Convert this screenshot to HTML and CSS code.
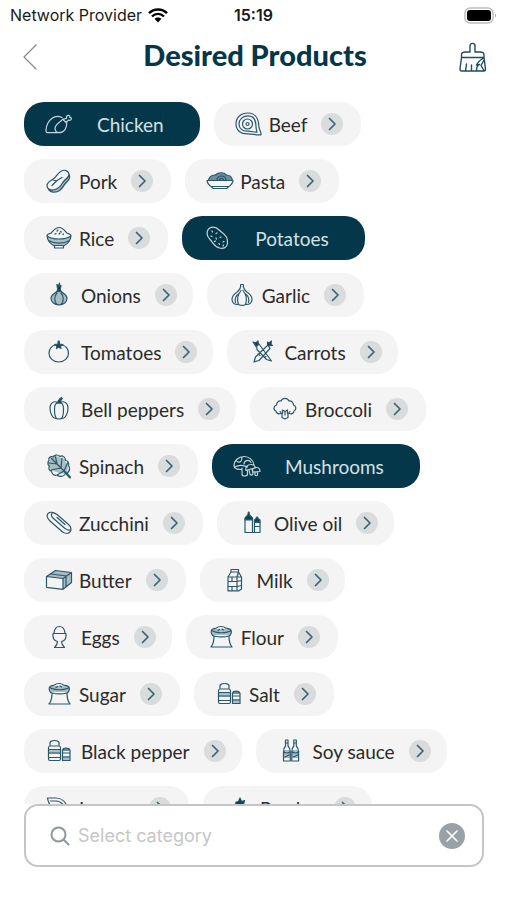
FILE: index.html
```html
<!DOCTYPE html>
<html lang="en">
<head>
    <meta charset="UTF-8">
    <meta name="viewport" content="width=device-width, initial-scale=1.0">
    <title>Desired Products</title>
    <link rel="stylesheet" href="styles.css">
</head>
<body>
    <!-- icon sprite -->
    <svg class="sprite" aria-hidden="true">
        <symbol id="arrow" viewBox="0 0 22 22"><path d="M8.500 5.500l5.500 5.500-5.500 5.500"/></symbol>
        <symbol id="chicken" viewBox="0 0 28 28">
            <path d="M17 7.500C10 4 2 9.500 1 20c-.1 1.800.6 2.700 2 2.700h10.500c6.500 0 8.500-5.500 8.200-10.200"/>
            <path d="M18 9c-2 2.500-6 4-7.500 7.500-1.300 3.200.3 6 3 6M18 9.500l3 3 2.500-2.500c1.500.8 3-.2 2.800-1.500-.1-.9-.8-1.300-1.600-1.200.3-1-.3-2-1.400-2-1.500 0-2.300 1.500-1.600 2.800z"/>
        </symbol>
        <symbol id="beef" viewBox="0 0 28 28">
            <path d="M13 3C6 3 1 7.500 1 14s5 10 11.500 9.800c5-.2 9 1.700 13.500 1 .8-2-2-4.500-2.200-9C23.500 8 19.500 3 13 3z"/>
            <path d="M13 5.800c-5 0-9 3.500-9 8.200s3.500 7.300 8.500 7.200c4 0 6.500 1 9.500 1-.8-2-1-4-1.100-7C20.700 9.500 18 5.800 13 5.800z"/>
            <circle cx="12.500" cy="14" r="5"/><circle cx="12.500" cy="14" r="1.500"/>
        </symbol>
        <symbol id="pork" viewBox="0 0 28 28">
            <path class="shade" d="M23.500 7c3 3.500 1 7-2 9.500-2.500 2.500-4 8-10.500 8.500-4 .3-7-1-8-4 7 3 12 0 14-5s6-4 6.500-9z"/>
            <path d="M16 4.200c3.500-2 7.500-.7 8 3 .4 4-4.500 5-6.500 8.800S13 22.500 8 23c-3.500.3-6-1.500-6-4.500 0-4 4-4.500 7-7s3.500-5.300 7-7.300zM3 21c1.500 5 8 5 11.500 2.500 4-3 4-6 7-8.500 3-2.300 4-5 2.500-8"/>
            <path d="M7 18.500l5-5 5-3M9 13.500l3 0"/>
        </symbol>
        <symbol id="pasta" viewBox="0 0 28 28">
            <path class="shade deep" d="M2 13.500C3 9.500 6 8 9 7.500c4-3 10-2 12 .5 3 .5 5 2.500 5.500 5.500z"/>
            <path d="M1 13.500h26c0 3.500-3 5.500-6.500 8h-13C4 19 1 17 1 13.500zM2.500 13.500C3 9.500 6 8 9.500 8c3-3 8-3 11 0 3.500 0 5.500 2.500 6 5.500M11 13.500c0-6 9-6 9 0M13.500 13.500c0-3 4-3 4 0M6 19.500h16"/>
        </symbol>
        <symbol id="rice" viewBox="0 0 28 28">
            <path class="shade" d="M2 12c7 3.500 17 3.500 24 0-.5 5-3 7.500-7 9.500H9C5 19.500 2.500 17 2 12z"/>
            <path d="M2 12c0-1.500 2-2.300 4-2.800C8 7.500 10 3.500 14 3.500s6 4 8 5.700c2 .5 4 1.300 4 2.800-.5 5-3.500 8-7.500 10v2h-9v-2C5.500 20 2.500 17 2 12zM2 12c5 4 19 4 24 0M3.500 16.500c6 3.500 15 3.500 21 0M9 21.500h10M12 7l1-1M15.500 7.500l1 .5M10 10l1-.5M14 10l1-1M18 10.500l.5-.5"/>
        </symbol>
        <symbol id="potato" viewBox="0 0 28 28">
            <path d="M10.500 3.200c4 0 5.500 3.300 8.500 5.300 4 2.600 6 6.500 5.500 11-.5 4-4 5.500-8 4.500C11 22.700 10.500 19 7.500 16 5 13.500 3.500 11 4.300 7.500 5 4.800 7.500 3.200 10.500 3.200z"/>
            <path d="M9 7l.5 1M14 9l-1 .5M8 12l1 .5M13 14l.5 1M18 13l-1 .5M20 18l1-.5M16 19.500l.5 1M11.500 17.500l1-.5M20 22l.5-1"/>
        </symbol>
        <symbol id="onion" viewBox="0 0 28 28">
            <path class="shade" d="M14 8c-2 3-8 3.500-8 9 0 4 3.500 7 8 7s8-3 8-7c0-5.500-6-6-8-9z"/>
            <path class="solid" d="M12.800 9l-1-5.500 1.700 1.500L14.500 2l.3 3.500L16 4.500 15.200 9l1 1.500h-4.400z"/>
            <path d="M13 9c-1 3-7 3.500-7 8.300C6 21 9.500 23.800 14 23.800s8-2.800 8-6.500C22 12.500 16 12 15 9M12 12c-3 3-3 8.500 0 11.500M16 12c3 3 3 8.500 0 11.500"/>
        </symbol>
        <symbol id="garlic" viewBox="0 0 28 28">
            <path d="M12.700 3.500c.3 4-1.400 6-4.200 8C5.500 13.500 4 15.500 4 18.500c0 3.500 3 5.500 6.500 4.800 1.500 1.500 5.500 1.500 7 0 3.500.7 6.500-1.300 6.500-4.800 0-3-1.500-5-4.500-7-2.800-2-4.500-4-4.200-8zM13 9.500c-3.500 4.500-4.500 9-2.500 13.800M15 9.500c3.500 4.500 4.500 9 2.500 13.800M11 12.500c-3.500 2.500-4.500 5.500-3.500 9M17 12.500c3.500 2.500 4.500 5.500 3.500 9"/>
        </symbol>
        <symbol id="tomato" viewBox="0 0 28 28">
            <path d="M10.500 7C7 7.500 4 10.800 4 15.200 4 20 8 24 13.700 24s9.800-4 9.800-8.800c0-4.400-3-7.700-6.500-8.200"/>
            <path class="solid" d="M13.200 3h1l.3 3.200 3.500.3-2.500 1.500.5 2.500-2.300-1.500-2.300 1.500.5-2.500L9.500 6.500l3.400-.3z"/>
        </symbol>
        <symbol id="carrots" viewBox="0 0 28 28">
            <path d="M8.500 7.500L11 6l12.500 17-5-1.500L9 11.500zM20 7l2 3.500L11 22.500 6 24l1.500-5zM10 16l2 1.500M16.500 19.500l1.500-1"/>
            <path class="solid" d="M5 4l3 .8L10 3l.5 3.500L8 8.500zM19.500 4l1.500 1 2.500-2-.5 3.500 1.500 1-4 .5-1-1.500z"/>
        </symbol>
        <symbol id="bellpepper" viewBox="0 0 28 28">
            <path d="M12.500 7.500C9 5.500 5 8 5 13c0 6 3 10.500 5.500 10.500 1 0 1.500.5 3.500.5s2.500-.5 3.500-.5C20 23.500 23 19 23 13c0-5-4-7.500-7.500-5.500M14 8c-3.500-.5-4.500 2-4.500 6 0 5 1 9 2.500 9.700M14 8c3.500-.5 4.500 2 4.500 6 0 5-1 9-2.500 9.700"/>
            <path class="solid" d="M12 8c1.500-1.500 1.500-4 4.500-5.500l.8 1c-1.500 1-1.800 2.500-1.300 4.500z"/>
        </symbol>
        <symbol id="broccoli" viewBox="0 0 28 28">
            <path d="M9.500 18.500c-2 1-4.500-.5-4.500-2.500-3-1-2.500-5 .5-6 0-3 2.500-4.500 4.500-4 1.500-3.500 6.500-3.500 8 0 2-.5 4.500 1 4.500 4 3 1 3 5 .5 6 0 2-2.500 3.500-4.500 2.500"/>
            <path d="M9 16.500l2 2.500v3.500l3 1.500 3-1.500V19l2-2.500M11.500 18.500V15l2.500 1.500 2.500-1.500v3.500M14 17v3"/>
        </symbol>
        <symbol id="spinach" viewBox="0 0 28 28">
            <path class="shade" d="M8 3l6 2 5 2 4 7-1 8-8-1-8-3-3-6z"/>
            <path d="M22 21.500c3-3 3-6 1.500-8 .8-3-1-5-3-5C20.500 5 17.500 3 15 4.500 12.500 2 9 3 8.500 5 5.500 3.500 3 6 4 8.500c-2 2-1 5 .5 5.500-1.500 2.500 0 5 2 5 0 3 3 5 5.500 4 2 2 6 2 8-.5M6 6l19 19M12 12l-1.500-7M12 12l-8-1M16 16l1-10M16 16l-10 2M19 19l4-9M19 19l-7 4"/>
            <path d="M20 20l5 5.500" stroke-width="2"/>
        </symbol>
        <symbol id="mushrooms" viewBox="0 0 28 28">
            <path d="M9 17.500c-4 0-8-.5-8-3.500C1 8.500 5.500 4.500 11 4.500c5 0 9.500 3.500 10 8.500M9 16v6c0 1.500 1 2 2.500 2s3-.5 3-2v-4M1.500 15c5-2.500 9-2 13 0M4 9.500c3 1.500 5 0 5-4.500M11 12c0-3.500 5-5 7-1.500M13 18.500c-1-4 2-6 5-6 2.500 0 4 1.500 4.500 3.500l-5 1zM16 17.500l1 5c1.500 1 3 .5 3-1l-1-4.500M19.500 19c0-2 1.500-3.500 4-3.500s3.500 2 3.500 4l-7 .5zM22 20v3c.5 1 2 1 2.500 0v-3.500"/>
        </symbol>
        <symbol id="zucchini" viewBox="0 0 28 28">
            <path d="M3 4.500C5 2.500 9 3 12 5.500l11 9.500c3 2.500 4 6 2 8s-5.500 1.500-8-.5L5 12C2.500 9.800 1 6.500 3 4.500z"/>
            <path d="M7 4.500c-1 1-1 3 1.500 5l11.500 10c2 1.500 4 2 5.500 1.500M12 8.500l8 7"/>
        </symbol>
        <symbol id="oil" viewBox="0 0 28 28">
            <path class="solid" d="M9.800 6l.6-3h.6l.6 3 2.900 3v2H7V9zM18 9.500l.8-1.500h.6l.6 1.500 2 1.500v2.500h-5.500V11z"/>
            <path d="M7 10.500h7.500v13H7zM16.500 13h5.500v10.500h-5.500zM7 23.500h15M16.500 17.500H22"/>
        </symbol>
        <symbol id="butter" viewBox="0 0 28 28">
            <path class="shade" d="M1.500 10.500l9-6 16 2v10L18 23.300V12.500z"/>
            <path d="M1.500 10.500l16.500 2v10.800l-16.500-2zM1.500 10.500L10.500 4.500l16 2L18 12.500M26.500 6.500v10L18 23.300M6 8l16 2M21 10.500v10"/>
        </symbol>
        <symbol id="milk" viewBox="0 0 28 28">
            <path d="M7 11l3-5h7.500l3 5v12l-2.500 1.800H7zM10 6V3.500h7.500V6M7 11h9l1.500-5M16 11h4.500M16 11v13.500M7 15.500h9l4.500-1M7 20.500h9l4.500-1M11 11v4.500M11 20.500v4"/>
        </symbol>
        <symbol id="eggs" viewBox="0 0 28 28">
            <path d="M9 10c.5-4 2.800-6.500 5.500-6.500S19.500 6 20 10M8 10.500h13v2.500c0 3-2 5-4.500 5.500 0 2.500 1 4 3 6h-10c2-2 3-3.500 3-6C10 18 8 16 8 13z"/>
        </symbol>
        <symbol id="sack" viewBox="0 0 28 28">
            <path class="shade" d="M4 8l3-2h15l3 2-1 4H5z"/>
            <path d="M7 13c-3-.5-3.500-5-2-6.500 2-1 3-1 4.500-1.500 2-2 7-2 9 0 1.500.5 3.500.5 5 1.500 1.500 1.500 1 6-2 6.500M5 7.500c4 3 15 3 19 0M7 13c4 1 11 1 15 0M7 13c0 5-.5 8-3 11h21c-2.500-3-3-6-3-11M11 7.500l1.500-1M15 6l1.500 1"/>
        </symbol>
        <symbol id="jars" viewBox="0 0 28 28">
            <path class="shade" d="M3.500 13h12v4h-12zM17.500 11h7v3h-7zM17.500 19h7v4h-7z"/>
            <path d="M5 5.500C6 2.800 13 2.800 14 5.500v3.500H5zM3.500 11c0-1 .5-2 1.500-2h9c1 0 1.500 1 1.500 2v11c0 1-.5 1.500-1.500 1.500H5c-1 0-1.500-.5-1.500-1.500zM3.500 12.500h12M3.500 16h12M3.500 20.500h12M18 13c0-2.500 6-2.500 6.500 0M17.500 13h7.500v10.500h-7.500zM17.500 16h7.500M17.500 20h7.500"/>
        </symbol>
        <symbol id="soy" viewBox="0 0 28 28">
            <path class="shade" d="M6.500 13h6.800v8H6.500zM15 13h6.600v8H15z"/>
            <path d="M8.500 3h2.500v6c2 2 2.300 4 2.300 6v9H6.500v-9c0-2 0-4 2-6zM16.800 3h2.500v6c2 2 2.300 4 2.300 6v9h-6.800v-9c0-2 0-4 2-6zM8.500 6H11M16.800 6h2.500M6.500 14.500c2 2 5 2 6.800 0M15 14.500c2 2 5 2 6.800 0M8 20l4-2M16.500 20l4-2"/>
        </symbol>
        <symbol id="lemon" viewBox="0 0 28 28">
            <path d="M2.500 4h8c6 0 10.500 4 12 10l-1 5C12 19 4 14 2.500 4zM5.500 7h5c5 0 8 2.500 9.500 8"/>
        </symbol>
        <symbol id="parsley" viewBox="0 0 28 28">
            <path class="solid" d="M12 8l2.500-.5L16 4l1.500 3.500 3-1-1 4-4 2.500-4-2z"/>
            <path d="M15 11l-3 13M8 13l5 5M21 14l-7 5"/>
        </symbol>
    </svg>

    <div class="screen">
        <div class="status-bar">
            <div class="carrier">
                <span>Network Provider</span>
                <svg class="wifi" viewBox="0 0 20 15" aria-hidden="true">
                    <path d="M1 5.200c5-5 13-5 18 0M4 8.500c3.500-3.500 8.500-3.500 12 0" fill="none" stroke="#000" stroke-width="2.400"/>
                    <path d="M6.500 10.800c2-1.900 5-1.900 7 0L10 14.500z" fill="#000"/>
                </svg>
            </div>
            <div class="time">15:19</div>
            <svg class="battery" viewBox="0 0 33 17" aria-hidden="true">
                <rect x="1" y="1" width="28" height="15" rx="5" fill="#fff" stroke="#bdbdbd" stroke-width="1.500"/>
                <rect x="3" y="3" width="24" height="11" rx="3" fill="#000"/>
                <path d="M31 6.500c1.500.5 1.500 3.500 0 4z" fill="#aaa"/>
            </svg>
        </div>

        <header class="header">
            <button class="icon-button" aria-label="Back">
                <svg class="back" viewBox="0 0 14 26"><path d="M13 1L1 13l12 12"/></svg>
            </button>
            <h1>Desired Products</h1>
            <button class="icon-button" aria-label="Clear selection">
                <svg class="brush" viewBox="0 0 28 30">
                    <path d="M11 10V4c0-3.500 5-3.500 5 0v6h5c2.500 0 4 1.200 4 3v2.500H2.500V13c0-1.800 1.500-3 4-3zM2.500 15.500L1 27c0 1.300.5 2 1.500 2H25c1 0 1.500-.7 1.500-2L25 15.500M7.500 22L6.500 29M12.500 23v6M24.500 16c-3 2-6 4-7 7l3-.5c-2.500 1.500-3.500 4-2.500 6.500M25 18l-3 5.500 3 5"/>
                </svg>
            </button>
        </header>

        <main class="products">
            <button class="chip selected" aria-pressed="true"><svg class="chip-icon"><use href="#chicken"/></svg><span>Chicken</span></button>
            <button class="chip"><svg class="chip-icon"><use href="#beef"/></svg><span>Beef</span><svg class="chip-arrow"><use href="#arrow"/></svg></button>
            <button class="chip"><svg class="chip-icon"><use href="#pork"/></svg><span>Pork</span><svg class="chip-arrow"><use href="#arrow"/></svg></button>
            <button class="chip"><svg class="chip-icon"><use href="#pasta"/></svg><span>Pasta</span><svg class="chip-arrow"><use href="#arrow"/></svg></button>
            <button class="chip"><svg class="chip-icon"><use href="#rice"/></svg><span>Rice</span><svg class="chip-arrow"><use href="#arrow"/></svg></button>
            <button class="chip selected" aria-pressed="true"><svg class="chip-icon"><use href="#potato"/></svg><span>Potatoes</span></button>
            <button class="chip narrow"><svg class="chip-icon"><use href="#onion"/></svg><span>Onions</span><svg class="chip-arrow"><use href="#arrow"/></svg></button>
            <button class="chip"><svg class="chip-icon"><use href="#garlic"/></svg><span>Garlic</span><svg class="chip-arrow"><use href="#arrow"/></svg></button>
            <button class="chip narrow"><svg class="chip-icon"><use href="#tomato"/></svg><span>Tomatoes</span><svg class="chip-arrow"><use href="#arrow"/></svg></button>
            <button class="chip narrow"><svg class="chip-icon"><use href="#carrots"/></svg><span>Carrots</span><svg class="chip-arrow"><use href="#arrow"/></svg></button>
            <button class="chip narrow"><svg class="chip-icon"><use href="#bellpepper"/></svg><span>Bell peppers</span><svg class="chip-arrow"><use href="#arrow"/></svg></button>
            <button class="chip"><svg class="chip-icon"><use href="#broccoli"/></svg><span>Broccoli</span><svg class="chip-arrow"><use href="#arrow"/></svg></button>
            <button class="chip"><svg class="chip-icon"><use href="#spinach"/></svg><span>Spinach</span><svg class="chip-arrow"><use href="#arrow"/></svg></button>
            <button class="chip selected" aria-pressed="true"><svg class="chip-icon"><use href="#mushrooms"/></svg><span>Mushrooms</span></button>
            <button class="chip"><svg class="chip-icon"><use href="#zucchini"/></svg><span>Zucchini</span><svg class="chip-arrow"><use href="#arrow"/></svg></button>
            <button class="chip narrow"><svg class="chip-icon"><use href="#oil"/></svg><span>Olive oil</span><svg class="chip-arrow"><use href="#arrow"/></svg></button>
            <button class="chip"><svg class="chip-icon"><use href="#butter"/></svg><span>Butter</span><svg class="chip-arrow"><use href="#arrow"/></svg></button>
            <button class="chip narrow"><svg class="chip-icon"><use href="#milk"/></svg><span>Milk</span><svg class="chip-arrow"><use href="#arrow"/></svg></button>
            <button class="chip narrow"><svg class="chip-icon"><use href="#eggs"/></svg><span>Eggs</span><svg class="chip-arrow"><use href="#arrow"/></svg></button>
            <button class="chip"><svg class="chip-icon"><use href="#sack"/></svg><span>Flour</span><svg class="chip-arrow"><use href="#arrow"/></svg></button>
            <button class="chip"><svg class="chip-icon"><use href="#sack"/></svg><span>Sugar</span><svg class="chip-arrow"><use href="#arrow"/></svg></button>
            <button class="chip"><svg class="chip-icon"><use href="#jars"/></svg><span>Salt</span><svg class="chip-arrow"><use href="#arrow"/></svg></button>
            <button class="chip narrow"><svg class="chip-icon"><use href="#jars"/></svg><span>Black pepper</span><svg class="chip-arrow"><use href="#arrow"/></svg></button>
            <button class="chip narrow"><svg class="chip-icon"><use href="#soy"/></svg><span>Soy sauce</span><svg class="chip-arrow"><use href="#arrow"/></svg></button>
            <button class="chip"><svg class="chip-icon"><use href="#lemon"/></svg><span>Lemon</span><svg class="chip-arrow"><use href="#arrow"/></svg></button>
            <button class="chip narrow"><svg class="chip-icon"><use href="#parsley"/></svg><span>Parsley</span><svg class="chip-arrow"><use href="#arrow"/></svg></button>
        </main>

        <form class="search">
            <svg class="search-icon" viewBox="0 0 20 20" aria-hidden="true"><circle cx="8.500" cy="8.500" r="7"/><path d="M13.500 13.500L18.500 18.500"/></svg>
            <input type="text" placeholder="Select category" aria-label="Select category">
            <button type="reset" class="clear" aria-label="Clear">
                <svg viewBox="0 0 26 26"><path d="M8 8l10 10M18 8L8 18"/></svg>
            </button>
        </form>
    </div>
</body>
</html>
```
FILE: styles.css
```css
* {
    box-sizing: border-box;
}
body {
    margin: 0;
    background-color: #fff;
    color: #2b2b2b;
    font-family: Lato, "Liberation Sans", sans-serif;
}
button {
    padding: 0;
    border: none;
    background: none;
    font: inherit;
    color: inherit;
    cursor: pointer;
}
.sprite {
    display: none;
}
.screen {
    display: flex;
    flex-direction: column;
    height: 100vh;
}

/* status bar */
.status-bar {
    display: grid;
    grid-template-columns: 1fr auto 1fr;
    align-items: center;
    height: 30px;
    padding: 0 10px;
    font-family: Inter, sans-serif;
    font-size: 16px;
    color: #1a1a1a;
}
.carrier {
    display: flex;
    align-items: center;
    gap: 6px;
    white-space: nowrap;
}
.wifi {
    width: 20px;
    height: 15px;
}
.time {
    font-weight: 600;
}
.battery {
    width: 33px;
    height: 17px;
    justify-self: end;
}

/* title row */
.header {
    display: flex;
    align-items: center;
    justify-content: space-between;
    height: 54px;
    padding: 0 20px 0 23px;
}
.header h1 {
    margin: 0;
    padding-bottom: 4px;
    font-size: 29px;
    line-height: 36px;
    font-weight: 900;
    color: #05374a;
}
.icon-button {
    display: flex;
    width: 28px;
}
.icon-button svg {
    fill: none;
    stroke-linecap: round;
    stroke-linejoin: round;
}
.back {
    width: 14px;
    height: 26px;
    stroke: #8a8a8a;
    stroke-width: 1.3;
}
.brush {
    width: 28px;
    height: 30px;
    stroke: #1d4d5e;
    stroke-width: 1.4;
}

/* product chips */
.products {
    flex: 1;
    min-height: 0;
    display: flex;
    flex-wrap: wrap;
    align-content: flex-start;
    gap: 13px 14px;
    padding: 18px 23px 0 24px;
    overflow-y: auto;
    scrollbar-width: none;
}
.chip {
    display: flex;
    align-items: center;
    height: 44px;
    padding: 0 18px 0 21px;
    border-radius: 20px;
    background-color: #f4f4f4;
    font-size: 19px;
    white-space: nowrap;
}
.chip-icon {
    width: 28px;
    height: 28px;
    margin-right: 6px;
    fill: none;
    stroke: #2a5869;
    stroke-width: 1.2;
    stroke-linecap: round;
    stroke-linejoin: round;
}
.chip.narrow {
    padding-right: 16px;
}
.chip.narrow .chip-icon {
    margin-right: 8px;
}
.shade {
    fill: #a9bdc4;
    stroke: none;
}
.shade.deep {
    fill: #6d8f9b;
}
.solid {
    fill: #0c4256;
}
.chip-arrow {
    width: 22px;
    height: 22px;
    margin-left: 14px;
    border-radius: 50%;
    background-color: #d8dcdc;
    fill: none;
    stroke: #3b6472;
    stroke-width: 1.7;
    stroke-linecap: round;
    stroke-linejoin: round;
}
.chip.selected {
    padding-right: 36px;
    background-color: #05374a;
    color: #d5e0e4;
}
.chip.selected .chip-icon {
    margin-right: 24px;
    stroke: #c3d3d9;
}

/* search box */
.search {
    display: flex;
    align-items: center;
    height: 63px;
    margin: 0 23px 33px 24px;
    padding: 0 17px 0 24px;
    border: 2px solid #c4c6c6;
    border-radius: 14px;
    background-color: #fff;
}
.search-icon {
    width: 20px;
    height: 20px;
    fill: none;
    stroke: #8f999c;
    stroke-width: 2;
    stroke-linecap: round;
}
.search input {
    flex: 1;
    min-width: 0;
    padding: 0 8px;
    border: none;
    outline: none;
    background: none;
    font-family: Inter, sans-serif;
    font-size: 18px;
    color: #2b2b2b;
}
.search input::placeholder {
    color: #c6c6c6;
    opacity: 1;
}
.clear {
    width: 26px;
    height: 26px;
    border-radius: 50%;
    background-color: #98a2a6;
}
.clear svg {
    display: block;
    fill: none;
    stroke: #fff;
    stroke-width: 1.6;
    stroke-linecap: round;
}
```
